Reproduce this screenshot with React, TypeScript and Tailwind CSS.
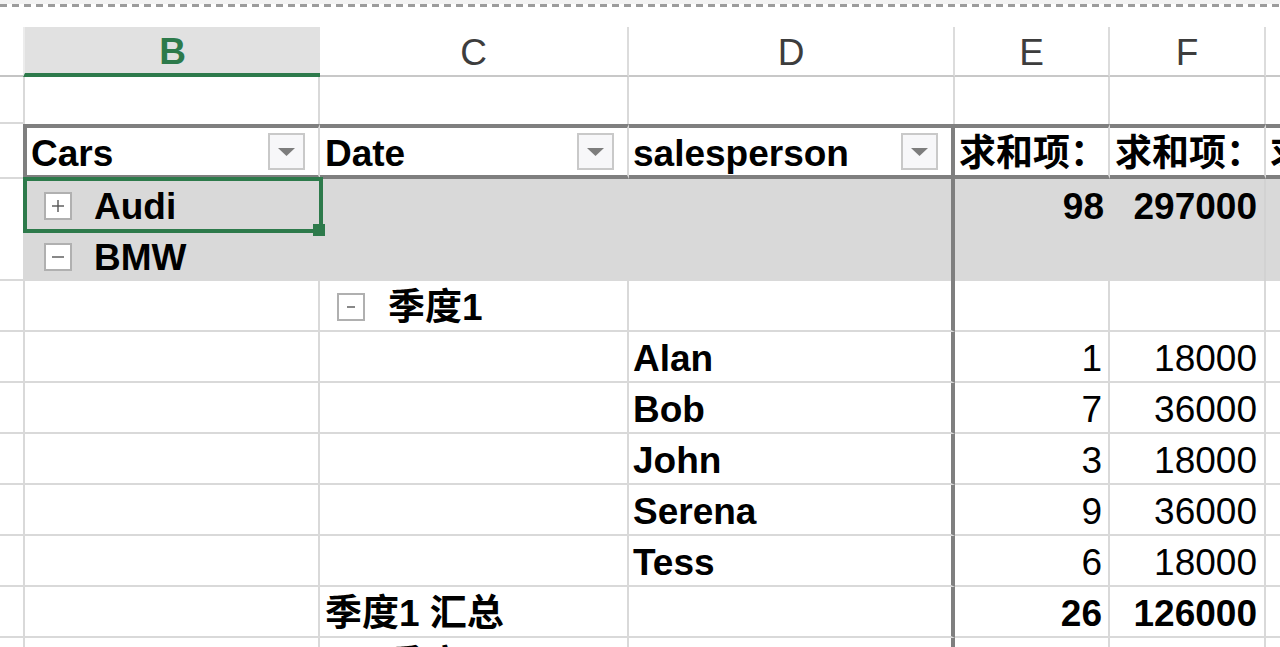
import clsx from "clsx";
import type { ReactNode } from "react";

// grid line helpers
const bB = "border-b-2 border-b-[#d9d9d9]";
const bR = "border-r-2 border-r-[#d9d9d9]";
const bL = "border-l-2 border-l-[#d9d9d9]";
const thickR = "border-r-4 border-r-[#7f7f7f]";

const W = {
	a: "w-[23px]",
	b: "w-[297px]",
	c: "w-[309px]",
	d: "w-[326px]",
	e: "w-[155px]",
	f: "w-[156px]",
	g: "flex-1 min-w-0",
};

const people: [string, number, number][] = [
	["Alan", 1, 18000],
	["Bob", 7, 36000],
	["John", 3, 18000],
	["Serena", 9, 36000],
	["Tess", 6, 18000],
];

function Cell({ w, className, children }: { w: string; className?: string; children?: ReactNode }) {
	return (
		<div className={clsx("flex shrink-0 items-center overflow-hidden whitespace-nowrap pt-[3px] leading-none", w, className)}>
			{children}
		</div>
	);
}

function Toggle({ open, short }: { open: boolean; short?: boolean }) {
	return (
		<span className="flex h-[28px] w-[28px] shrink-0 items-center justify-center border-2 border-[#b0b0b0] bg-white">
			<svg width="14" height="14" viewBox="0 0 14 14">
				<path d={short ? "M3 7h8" : "M1 7h12"} stroke="#555" strokeWidth="1.4" />
				{!open && <path d="M7 1v12" stroke="#555" strokeWidth="1.4" />}
			</svg>
		</span>
	);
}

function Dropdown() {
	return (
		<span className="ml-auto mr-[13px] -mt-[3px] flex h-[37px] w-[37px] shrink-0 items-center justify-center border-2 border-[#c9c9c9] bg-[#f7f7f9]">
			<svg width="17" height="8" viewBox="0 0 17 8">
				<path d="M0 0h17L8.5 8z" fill="#7d7d7d" />
			</svg>
		</span>
	);
}

export default function App() {
	const thickTB = "border-t-4 border-t-[#7f7f7f] border-b-4 border-b-[#7f7f7f]";

	return (
		<div className="relative h-[647px] w-[1280px] overflow-hidden bg-white text-[37px] text-black font-['Liberation_Sans','Noto_Sans_CJK_SC',sans-serif]">
			{/* top strip with page break dashes */}
			<div className="h-[4px] bg-[#f3f3f3]" />
			<div className="h-[3px] bg-[repeating-linear-gradient(90deg,#9c9c9c_0_7px,transparent_7px_12px)]" />
			<div className="h-[20px]" />

			{/* column letters */}
			<div className="flex h-[50px]">
				<Cell w={W.a} className="border-b-2 border-b-[#c4c4c4]" />
				<Cell w={W.b} className="justify-center border-b-4 border-b-[#2d7a4b] border-l-2 border-l-[#ececec] bg-[#e1e1e1] font-bold text-[#2d7a4b]">
					B
				</Cell>
				{["C", "D", "E", "F"].map((l, i) => (
					<Cell
						key={l}
						w={[W.c, W.d, W.e, W.f][i]}
						className="justify-center border-b-2 border-b-[#c8c8c8] border-r-2 border-r-[#dcdcdc] text-[#3d3d3d]"
					>
						{l}
					</Cell>
				))}
				<Cell w={W.g} className="border-b-2 border-b-[#c8c8c8]" />
			</div>

			{/* empty row */}
			<div className="flex h-[47px]">
				<Cell w={W.a} className={bB} />
				<Cell w={W.b} className={clsx(bL, bR)} />
				<Cell w={W.c} className={bR} />
				<Cell w={W.d} className={bR} />
				<Cell w={W.e} className={bR} />
				<Cell w={W.f} className={bR} />
				<Cell w={W.g} />
			</div>

			{/* pivot header */}
			<div className="flex h-[55px] font-bold">
				<Cell w={W.a} className={clsx(bB, "mt-[4px] h-[51px]")} />
				<Cell w={W.b} className={clsx(thickTB, bR, "border-l-4 border-l-[#7f7f7f] pl-[4px]")}>
					Cars
					<Dropdown />
				</Cell>
				<Cell w={W.c} className={clsx(thickTB, bR, "pl-[5px]")}>
					Date
					<Dropdown />
				</Cell>
				<Cell w={W.d} className={clsx(thickTB, thickR, "pl-[4px]")}>
					<span>salesperson</span>
					<Dropdown />
				</Cell>
				<Cell w={W.e} className={clsx(thickTB, bR, "pl-[4px]")}>
					求和项：
				</Cell>
				<Cell w={W.f} className={clsx(thickTB, bR, "pl-[5px]")}>
					求和项：
				</Cell>
				<Cell w={W.g} className={clsx(thickTB, "pl-[4px]")}>
					求和项：
				</Cell>
			</div>

			{/* Audi */}
			<div className="flex h-[51px] font-bold">
				<Cell w={W.a} />
				<Cell w={W.b} className="border-l-2 border-l-[#d9d9d9] bg-[#d9d9d9] pl-[19px]">
					<Toggle open={false} />
					<span className="ml-[22px]">Audi</span>
				</Cell>
				<Cell w={W.c} className="bg-[#d9d9d9]" />
				<Cell w={W.d} className={clsx(thickR, "bg-[#d9d9d9]")} />
				<Cell w={W.e} className="justify-end bg-[#d9d9d9] pr-[6px]">
					98
				</Cell>
				<Cell w={W.f} className="justify-end border-r-2 border-r-[#d2d2d2] bg-[#d9d9d9] pr-[7px]">
					297000
				</Cell>
				<Cell w={W.g} className="bg-[#d9d9d9]" />
			</div>

			{/* BMW */}
			<div className="flex h-[51px] font-bold">
				<Cell w={W.a} className={bB} />
				<Cell w={W.b} className="border-l-2 border-l-[#d9d9d9] bg-[#d9d9d9] pl-[19px]">
					<Toggle open />
					<span className="ml-[22px]">BMW</span>
				</Cell>
				<Cell w={W.c} className="bg-[#d9d9d9]" />
				<Cell w={W.d} className={clsx(thickR, "bg-[#d9d9d9]")} />
				<Cell w={W.e} className="bg-[#d9d9d9]" />
				<Cell w={W.f} className="border-r-2 border-r-[#d2d2d2] bg-[#d9d9d9]" />
				<Cell w={W.g} className="bg-[#d9d9d9]" />
			</div>

			{/* 季度1 */}
			<div className="flex h-[51px] font-bold">
				<Cell w={W.a} className={bB} />
				<Cell w={W.b} className={clsx(bL, bR, bB)} />
				<Cell w={W.c} className={clsx(bR, bB, "pl-[17px]")}>
					<Toggle open short />
					<span className="ml-[23px]">季度1</span>
				</Cell>
				<Cell w={W.d} className={clsx(thickR, bB)} />
				<Cell w={W.e} className={clsx(bR, bB)} />
				<Cell w={W.f} className={clsx(bR, bB)} />
				<Cell w={W.g} className={bB} />
			</div>

			{people.map(([name, n, amount]) => (
				<div key={name} className="flex h-[51px]">
					<Cell w={W.a} className={bB} />
					<Cell w={W.b} className={clsx(bL, bR, bB)} />
					<Cell w={W.c} className={clsx(bR, bB)} />
					<Cell w={W.d} className={clsx(thickR, bB, "pl-[4px] font-bold")}>
						{name}
					</Cell>
					<Cell w={W.e} className={clsx(bR, bB, "justify-end pr-[6px]")}>
						{n}
					</Cell>
					<Cell w={W.f} className={clsx(bR, bB, "justify-end pr-[7px]")}>
						{amount}
					</Cell>
					<Cell w={W.g} className={bB} />
				</div>
			))}

			{/* 季度1 汇总 */}
			<div className="flex h-[51px] font-bold">
				<Cell w={W.a} className={bB} />
				<Cell w={W.b} className={clsx(bL, bR, bB)} />
				<Cell w={W.c} className={clsx(bR, bB, "pl-[5px]")}>
					季度1 汇总
				</Cell>
				<Cell w={W.d} className={clsx(thickR, bB)} />
				<Cell w={W.e} className={clsx(bR, bB, "justify-end pr-[6px]")}>
					26
				</Cell>
				<Cell w={W.f} className={clsx(bR, bB, "justify-end pr-[7px]")}>
					126000
				</Cell>
				<Cell w={W.g} className={bB} />
			</div>

			{/* next group, cut off by the window */}
			<div className="flex h-[51px] font-bold">
				<Cell w={W.a} className={bB} />
				<Cell w={W.b} className={clsx(bL, bR, bB)} />
				<Cell w={W.c} className={clsx(bR, bB, "pl-[17px]")}>
					<Toggle open short />
					<span className="ml-[23px]">季度2</span>
				</Cell>
				<Cell w={W.d} className={clsx(thickR, bB)} />
				<Cell w={W.e} className={clsx(bR, bB)} />
				<Cell w={W.f} className={clsx(bR, bB)} />
				<Cell w={W.g} className={bB} />
			</div>

			{/* active cell selection */}
			<div className="absolute left-[23px] top-[177px] h-[56px] w-[300px] border-4 border-[#2d7a4b]" />
			<div className="absolute left-[313px] top-[224px] h-[12px] w-[12px] bg-[#2d7a4b]" />
		</div>
	);
}
